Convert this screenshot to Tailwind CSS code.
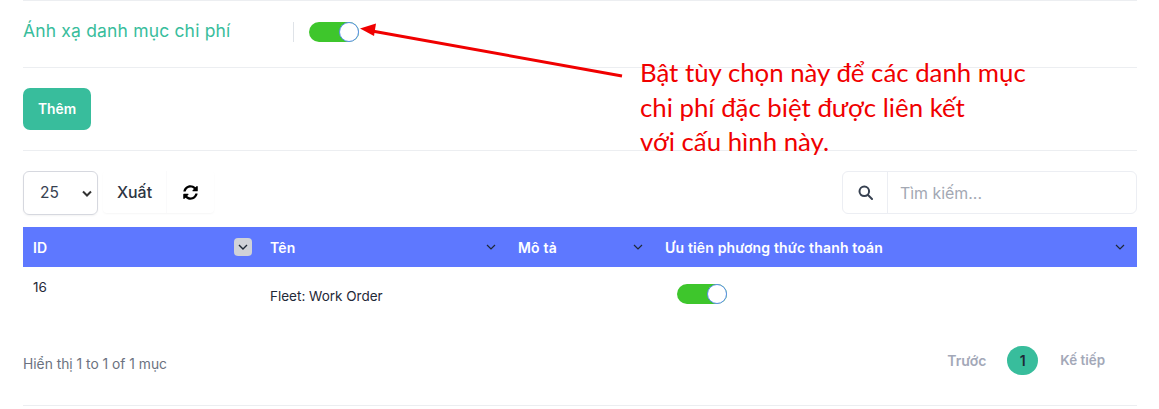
<!DOCTYPE html>
<html lang="vi">
<head>
<meta charset="utf-8">
<script src="https://cdn.jsdelivr.net/npm/@tailwindcss/browser@4"></script>
</head>
<body class="bg-white">
<div class="relative w-[1159px] h-[409px] overflow-hidden bg-white pl-[23px] pr-[22px] font-['Inter',sans-serif] text-[#1f2937]">
  <div class="border-t border-[#eceef1] h-[67px] flex items-center pb-[5px]">
    <div class="w-[271px] h-[20px] flex items-center border-r border-[#dfe3e8] text-[17.5px] text-[#38bd9c] tracking-[0.17px]">Ánh xạ danh mục chi phí</div>
    <div class="ml-[15px] relative w-[50px] h-[20px] rounded-full bg-[#3ec62c]">
      <div class="absolute right-0 top-0 w-[20px] h-[20px] rounded-full bg-white border border-[#5b8def]"></div>
    </div>
  </div>
  <div class="border-t border-[#eceef1] h-[83px] pt-[20px]">
    <button class="w-[68px] h-[42px] rounded-[7px] bg-[#38bd9c] text-white text-[13.8px] font-semibold">Thêm</button>
  </div>
  <div class="border-t border-[#eceef1] h-[77px] flex justify-between pt-[20px]">
    <div class="flex items-start">
      <div class="relative w-[75px] h-[44px] rounded-[6px] border border-[#d6d8df] shadow-xs flex items-center pl-[16px] text-[15.5px] text-[#374151]">25
        <svg class="absolute right-[5px] top-[18px]" width="10" height="8" viewBox="0 0 10 8" fill="none" stroke="#333" stroke-width="2"><path d="M1 1.5l4 4 4-4"/></svg>
      </div>
      <div class="ml-[5px] w-[111px] h-[42px] rounded-[4px] flex items-center shadow-[0_1px_2px_rgba(0,0,0,0.04)]">
        <div class="w-[64px] h-full pt-[1px] flex items-center justify-center text-[15.9px] font-medium text-[#2d3542] border-r border-[#fafafb]">Xuất</div>
        <div class="flex-1 flex justify-center pr-[1px]">
          <svg width="15" height="15" viewBox="0 0 512 512" fill="#000"><path d="M370.72 133.28C339.458 104.008 298.888 87.962 255.848 88c-77.458.068-144.328 53.178-162.791 126.85-1.344 5.363-6.122 9.15-11.651 9.15H24.103c-7.498 0-13.194-6.807-11.807-14.176C33.933 94.924 134.813 8 256 8c66.448 0 126.791 26.136 171.315 68.685L463.03 40.97C478.149 25.851 504 36.559 504 57.941V192c0 13.255-10.745 24-24 24H345.941c-21.382 0-32.09-25.851-16.971-40.971l41.75-41.749zM32 296h134.059c21.382 0 32.09 25.851 16.971 40.971l-41.75 41.75c31.262 29.273 71.835 45.319 114.876 45.28 77.418-.07 144.315-53.144 162.787-126.849 1.344-5.363 6.122-9.15 11.651-9.15h57.304c7.498 0 13.194 6.807 11.807 14.176C478.067 417.076 377.187 504 256 504c-66.448 0-126.791-26.136-171.315-68.685L48.97 471.03C33.851 486.149 8 475.441 8 454.059V320c0-13.255 10.745-24 24-24z"/></svg>
        </div>
      </div>
    </div>
    <div class="w-[295px] h-[43px] rounded-[6px] border border-[#eceef3] flex items-stretch">
      <div class="w-[45px] flex items-center justify-center border-r border-[#eceef3]">
        <svg width="15" height="15" viewBox="0 0 15 15" fill="none" stroke="#374151" stroke-width="2"><circle cx="6.3" cy="6.3" r="4.8"/><path d="M10 10l4 4" stroke-linecap="round"/></svg>
      </div>
      <div class="flex-1 flex items-center pl-[12px] pt-[3px] text-[15.9px] text-[#a3a8b3]">Tìm kiếm...</div>
    </div>
  </div>
  <div class="w-[1114px] h-[40px] bg-[#5e78ff] flex items-center text-[14px] tracking-[0.17px] font-semibold text-white">
    <div class="w-[238px] pl-[10px] pr-[9px] flex items-center justify-between"><span>ID</span>
      <span class="w-[18px] h-[18px] rounded-[4px] bg-[#d0d2d8] flex items-center justify-center"><svg width="10" height="7" viewBox="0 0 10 7" fill="none" stroke="#1f2937" stroke-width="1.4"><path d="M1 1l4 4 4-4"/></svg></span></div>
    <div class="w-[248px] pl-[9px] pr-[13px] flex items-center justify-between"><span>Tên</span>
      <svg width="10" height="7" viewBox="0 0 10 7" fill="none" stroke="#1f2937" stroke-width="1.2"><path d="M1 1l4 4 4-4"/></svg></div>
    <div class="w-[146px] pl-[9px] pr-[12px] flex items-center justify-between"><span>Mô tả</span>
      <svg width="10" height="7" viewBox="0 0 10 7" fill="none" stroke="#1f2937" stroke-width="1.2"><path d="M1 1l4 4 4-4"/></svg></div>
    <div class="flex-1 pl-[10px] pr-[12px] flex items-center justify-between"><span>Ưu tiên phương thức thanh toán</span>
      <svg width="10" height="7" viewBox="0 0 10 7" fill="none" stroke="#1f2937" stroke-width="1.2"><path d="M1 1l4 4 4-4"/></svg></div>
  </div>
  <div class="w-[1114px] h-[60px] flex text-[13.5px] text-[#1f2937]">
    <div class="w-[238px] pl-[10px] pt-[10px]">16</div>
    <div class="w-[248px] pl-[9px] pt-[19px]">Fleet: Work Order</div>
    <div class="w-[146px]"></div>
    <div class="flex-1 pl-[22px] pt-[17px]">
      <div class="relative w-[50px] h-[20px] rounded-full bg-[#3ec62c]">
        <div class="absolute right-0 top-0 w-[20px] h-[20px] rounded-full bg-white border border-[#5b8def]"></div>
      </div>
    </div>
  </div>
  <div class="w-[1114px] h-[79px] border-b border-[#eceef1] flex items-start justify-between">
    <div class="pt-[27px] text-[13.8px] text-[#6b7280]">Hiển thị 1 to 1 of 1 mục</div>
    <div class="flex items-center pt-[19px] pr-[32px] text-[14px] font-semibold text-[#a3a8b8]">
      <span>Trước</span>
      <span class="ml-[21px] w-[31px] h-[29px] rounded-full bg-[#38bd9c] flex items-center justify-center text-[#1f2937]">1</span>
      <span class="ml-[22px] text-[13.4px]">Kế tiếp</span>
    </div>
  </div>
  <svg class="absolute left-0 top-0 pointer-events-none" width="1159" height="409" fill="none">
    <path d="M622 76L372 31" stroke="#f00000" stroke-width="3"/>
    <path d="M360 28.5L376 23.5L374 36Z" fill="#f00000"/>
  </svg>
  <div class="absolute left-[640px] top-[55px] font-['Lato',sans-serif] text-[#f00000] text-[25.8px] leading-[34.5px] whitespace-nowrap">Bật tùy chọn này để các danh mục<br>chi phí đặc biệt được liên kết<br>với cấu hình này.</div>
</div>
</body>
</html>
